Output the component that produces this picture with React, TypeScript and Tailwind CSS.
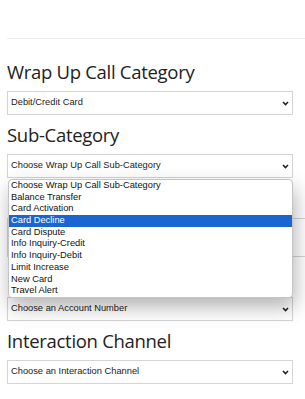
import React from "react";

const Chevron = () => (
  <svg width="7" height="5" viewBox="0 0 7 5" className="shrink-0">
    <path d="M1 1 L3.5 3.6 L6 1" fill="none" stroke="#222" strokeWidth="1.6" />
  </svg>
);

const Select = ({ label, children }: { label: string; children?: React.ReactNode }) => (
  <div className="relative">
    <div className="flex h-[24px] items-center justify-between border border-[#d4d4d4] bg-white pl-[3px] pr-[3px] text-[9.3px] text-[#222]" style={{ fontFamily: '"Liberation Sans", Arial, sans-serif' }}>
      <span>{label}</span>
      <Chevron />
    </div>
    {children}
  </div>
);

const Heading = ({ children }: { children: React.ReactNode }) => (
  <h2 className="mt-[9px] mb-[8px] text-[18.5px] leading-[22px] tracking-[-0.3px] text-[#222]" style={{ fontFamily: '"Open Sans", "Noto Sans", sans-serif' }}>
    {children}
  </h2>
);

const options = [
  "Choose Wrap Up Call Sub-Category",
  "Balance Transfer",
  "Card Activation",
  "Card Decline",
  "Card Dispute",
  "Info Inquiry-Credit",
  "Info Inquiry-Debit",
  "Limit Increase",
  "New Card",
  "Travel Alert",
];

export default function App() {
  return (
    <div className="w-[305px] h-[399px] overflow-hidden bg-white pl-[7px] pr-[12px]">
      <div className="h-[38px]" />
      <div className="mr-[-12px] h-px bg-[#ececec]" />
      <div className="h-[13px]" />
      <Heading>Wrap Up Call Category</Heading>
      <Select label="Debit/Credit Card" />
      <Heading>Sub-Category</Heading>
      <Select label="Choose Wrap Up Call Sub-Category">
        <div
          className="absolute left-[1px] right-0 top-[25px] z-10 rounded-[4px] border border-[#c4c4c4] bg-white shadow-[2px_9px_20px_rgba(0,0,0,0.3)]"
          style={{ fontFamily: '"Liberation Sans", Arial, sans-serif' }}
        >
          {options.map((o) => (
            <div
              key={o}
              className={
                o === "Card Decline"
                  ? "h-[11.7px] bg-[#1a65d2] pl-[2px] text-[9.3px] leading-[11.7px] text-white"
                  : "h-[11.7px] pl-[2px] text-[9.3px] leading-[11.7px] text-[#111]"
              }
            >
              {o}
            </div>
          ))}
        </div>
      </Select>
      <div className="h-[40px]" />
      <div className="mr-[-12px] h-[39px] border border-r-0 border-[#d4d4d4] bg-white" />
      <div className="h-[40px]" />
      <Select label="Choose an Account Number" />
      <Heading>Interaction Channel</Heading>
      <Select label="Choose an Interaction Channel" />
    </div>
  );
}
